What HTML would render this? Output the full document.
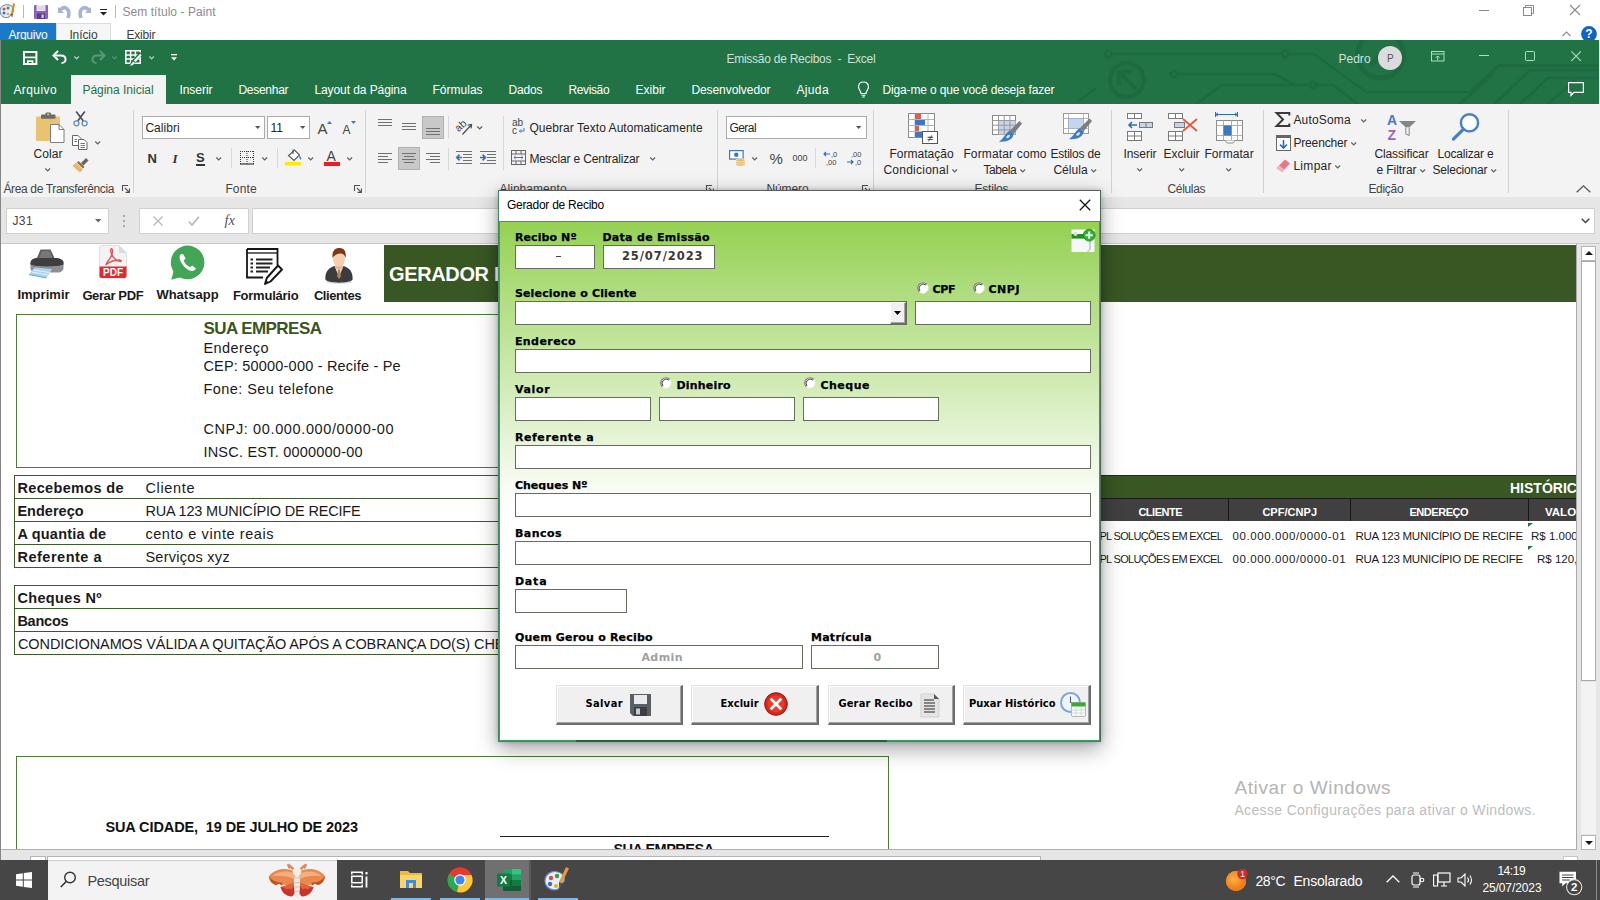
<!DOCTYPE html>
<html lang="pt-BR"><head><meta charset="utf-8"><title>Emissão de Recibos - Excel</title><style>
html,body{margin:0;padding:0}
body{width:1600px;height:900px;overflow:hidden;position:relative;background:#fff;font-family:"Liberation Sans",sans-serif;font-size:12px;color:#262626}
.t{position:absolute;white-space:pre;line-height:0;display:block}
div{box-sizing:border-box}
svg{overflow:visible;display:block}
</style></head><body>
<div style="position:absolute;left:0px;top:0px;width:1600px;height:40px;background:#fff;"></div>
<div style="position:absolute;left:0px;top:23px;width:56px;height:17px;background:#1979ca;"></div>
<div style="position:absolute;left:56px;top:23px;width:55px;height:18px;background:#f5f6f7;border:1px solid #dadbdc;border-bottom:none;"></div>
<span class="t" style="left:8.4px;top:35px;font-size:12px;color:#fff;letter-spacing:-0.25px;">Arquivo</span>
<span class="t" style="left:69.4px;top:35px;font-size:12px;color:#3c3c3c;letter-spacing:-0.10px;">Início</span>
<span class="t" style="left:126.4px;top:35px;font-size:12px;color:#3c3c3c;letter-spacing:-0.16px;">Exibir</span>
<span class="t" style="left:122.4px;top:12px;font-size:12px;color:#8c8c8c;letter-spacing:0.07px;">Sem título - Paint</span>
<div style="position:absolute;left:23px;top:5px;width:1px;height:13px;background:#b9b9b9;"></div>
<div style="position:absolute;left:115px;top:5px;width:1px;height:13px;background:#b9b9b9;"></div>
<svg style="position:absolute;left:0px;top:2px;" width="17" height="18" viewBox="0 0 17 18">
      <path d="M0 9 C0 4 5 2 9 3 C14 4 15 9 12 11 C10 12 11 14 9 15 C5 17 0 14 0 9Z" fill="#e8eef7" stroke="#5b7bb0" stroke-width="1"/>
      <circle cx="4" cy="7" r="1.5" fill="#e04a3a"/><circle cx="8" cy="6" r="1.5" fill="#3a9a3a"/><circle cx="4" cy="11" r="1.5" fill="#3a6fd0"/><circle cx="8" cy="12" r="1.3" fill="#e8b020"/>
      <path d="M13 1 L15 2 L13 12 L11 12Z" fill="#d9892b"/><path d="M11 12 L13 12 L12 16Z" fill="#6b4a2b"/></svg>
<svg style="position:absolute;left:34px;top:5px;" width="14" height="14" viewBox="0 0 14 14"><rect x="0" y="0" width="14" height="14" rx="1" fill="#8a63b8"/><rect x="2.5" y="0" width="9" height="6" fill="#ece6f5"/><path d="M2.5 2 H11.5 M2.5 4 H11.5" stroke="#c9b8e0" stroke-width="0.7"/><rect x="3" y="8.5" width="8" height="5.5" fill="#5a3d86"/><rect x="7.5" y="9.5" width="2.2" height="3.5" fill="#d8cceb"/></svg>
<svg style="position:absolute;left:57px;top:4px;" width="14" height="15" viewBox="0 0 14 15"><path d="M1 3 L1 9 L7 9 Z" fill="#a6b5cf"/><path d="M3 6 C8 1 14 5 11 14" fill="none" stroke="#a6b5cf" stroke-width="3.6"/></svg>
<svg style="position:absolute;left:78px;top:4px;" width="14" height="15" viewBox="0 0 14 15"><path d="M13 3 L13 9 L7 9 Z" fill="#a6b5cf"/><path d="M11 6 C6 1 0 5 3 14" fill="none" stroke="#a6b5cf" stroke-width="3.6"/></svg>
<svg style="position:absolute;left:100px;top:9px;" width="8" height="7" viewBox="0 0 8 7"><rect x="0" y="0" width="7" height="1" fill="#222"/><path d="M0 3 L7 3 L3.5 6.5Z" fill="#222"/></svg>
<div style="position:absolute;left:1479px;top:10px;width:10px;height:1px;background:#8a8a8a;"></div>
<svg style="position:absolute;left:1523px;top:5px;" width="11" height="11" viewBox="0 0 11 11"><rect x="0.5" y="2.5" width="8" height="8" fill="none" stroke="#8a8a8a"/><path d="M2.5 2.5 V0.5 H10.5 V8.5 H8.5" fill="none" stroke="#8a8a8a"/></svg>
<svg style="position:absolute;left:1570px;top:5px;" width="11" height="11" viewBox="0 0 11 11"><path d="M0 0 L10 10 M10 0 L0 10" stroke="#8a8a8a" stroke-width="1.1"/></svg>
<svg style="position:absolute;left:1562px;top:31px;" width="9" height="6" viewBox="0 0 9 6"><path d="M0.5 5 L4.5 1 L8.5 5" fill="none" stroke="#8c8c8c" stroke-width="1.1"/></svg>
<svg style="position:absolute;left:1581px;top:25.5px;" width="16" height="16" viewBox="0 0 16 16"><circle cx="8" cy="8" r="7.9" fill="#1163c4"/><text x="8" y="12.4" text-anchor="middle" font-family="Liberation Sans, sans-serif" font-weight="700" font-size="12" fill="#fff">?</text></svg>
<div style="position:absolute;left:0px;top:40px;width:1600px;height:64px;background:#217346;"></div>
<svg style="position:absolute;left:0px;top:40px;overflow:hidden;" width="1600" height="64" viewBox="0 40 1600 64">
      <g fill="none" stroke="#1e6a40" stroke-width="2.6" stroke-linecap="round" stroke-linejoin="round">
        <circle cx="1108.5" cy="54" r="3.2"/><path d="M1112 54 H1281 M1289 54 H1314 L1366 92 H1470 L1499 65.5 H1600"/><circle cx="1285" cy="54" r="3.2"/>
        <circle cx="1174" cy="74" r="3.2"/><path d="M1177.5 74 H1275 L1294 85 H1309"/><circle cx="1313" cy="85" r="3.2"/><path d="M1317 85 H1333 L1358 104"/>
        <path d="M1196 104 L1222 85 H1290"/>
        <circle cx="1127" cy="80" r="17" stroke-width="4"/><path d="M1119 72 L1135 88 M1119 72 H1130 M1119 72 V83" stroke-width="4.5"/>
        <circle cx="1380.5" cy="55" r="23" stroke-width="5"/><path d="M1372 64 L1388 48" stroke-width="5"/>
        <path d="M1495 104 L1530 70 H1600"/><path d="M1520 104 L1548 78 H1600"/><path d="M1460 104 L1492 75"/><path d="M1548 104 L1575 80"/>
        <path d="M1080 100 L1096 88" />
      </g></svg>
<div style="position:absolute;left:0px;top:40px;width:1px;height:820px;background:#868686;"></div>
<svg style="position:absolute;left:23px;top:51px;" width="15" height="15" viewBox="0 0 15 15"><rect x="1" y="1" width="12.4" height="12" fill="none" stroke="#fff" stroke-width="2"/><path d="M1 6.4 H13.4" stroke="#fff" stroke-width="1.7"/><path d="M4.8 13.5 V10.2 H9.6 V13.5" fill="none" stroke="#fff" stroke-width="1.7"/></svg>
<svg style="position:absolute;left:52px;top:50px;" width="16" height="14" viewBox="0 0 16 14"><path d="M6 1 L1.5 5.5 L6 10" fill="none" stroke="#fff" stroke-width="2"/><path d="M2 5.5 H9 C15 5.5 15 13 9.5 13" fill="none" stroke="#fff" stroke-width="2"/></svg>
<svg style="position:absolute;left:73.5px;top:56px;" width="6" height="4" viewBox="0 0 6 4"><path d="M0.3 0.5 L2.6 2.8 L4.9 0.5" fill="none" stroke="#a9ccb8" stroke-width="1.3"/></svg>
<svg style="position:absolute;left:90px;top:50px;" width="16" height="14" viewBox="0 0 16 14"><path d="M10 1 L14.5 5.5 L10 10" fill="none" stroke="#5a9a78" stroke-width="2"/><path d="M14 5.5 H7 C1 5.5 1 13 6.5 13" fill="none" stroke="#5a9a78" stroke-width="2"/></svg>
<svg style="position:absolute;left:112.2px;top:56px;" width="6" height="4" viewBox="0 0 6 4"><path d="M0.3 0.5 L2.6 2.8 L4.9 0.5" fill="none" stroke="#4f9470" stroke-width="1.3"/></svg>
<svg style="position:absolute;left:125px;top:50px;" width="17" height="16" viewBox="0 0 17 16"><path d="M0.8 0.8 H15.2 V13.2 H0.8Z M0.8 4.9 H15.2 M0.8 9 H15.2 M5.6 0.8 V13.2 M10.4 0.8 V13.2" fill="none" stroke="#fff" stroke-width="1.5"/>
      <path d="M17.5 4.5 L9 14.5 L4 16.8 L6.2 11.5 L14.8 2Z" fill="#217346"/><path d="M15.3 3.8 L16.6 5.2 L10.6 12 L8.8 10.6Z" fill="#fff"/><path d="M8.2 11.4 L10 13 C8.6 15.2 6.4 15.8 4.6 15.6 C6.2 14.8 6.8 12.8 8.2 11.4Z" fill="#fff"/></svg>
<svg style="position:absolute;left:148.5px;top:56px;" width="6" height="4" viewBox="0 0 6 4"><path d="M0.3 0.5 L2.6 2.8 L4.9 0.5" fill="none" stroke="#a9ccb8" stroke-width="1.3"/></svg>
<svg style="position:absolute;left:170.5px;top:54.3px;" width="7" height="7" viewBox="0 0 7 7"><rect x="0" y="0" width="6" height="1.3" fill="#fff"/><path d="M0 3.2 H6 L3 6.6Z" fill="#fff"/></svg>
<span class="t" style="left:726.4px;top:59px;font-size:12px;color:#cfe0d6;letter-spacing:-0.25px;">Emissão de Recibos  -  Excel</span>
<span class="t" style="left:1338.4px;top:59px;font-size:12px;color:#cfe0d6;letter-spacing:0.04px;">Pedro</span>
<div style="position:absolute;left:1378px;top:46px;width:24px;height:24px;background:#dcdcdc;border-radius:50%;"></div>
<span class="t" style="left:1386.9px;top:59px;font-size:10px;color:#555;">P</span>
<svg style="position:absolute;left:1431px;top:51px;" width="14" height="11" viewBox="0 0 14 11"><rect x="0.5" y="0.5" width="12.5" height="9.5" fill="none" stroke="#a9e0c0"/><path d="M0.5 3 H13" stroke="#a9e0c0"/><path d="M6.7 9.5 V5 M4.8 6.8 L6.7 4.9 L8.6 6.8" fill="none" stroke="#a9e0c0"/></svg>
<div style="position:absolute;left:1479px;top:55px;width:10px;height:1px;background:#a9e0c0;"></div>
<svg style="position:absolute;left:1525px;top:51px;" width="11" height="11" viewBox="0 0 11 11"><rect x="0.5" y="0.5" width="9" height="9" rx="0.8" fill="none" stroke="#a9e0c0"/></svg>
<svg style="position:absolute;left:1571px;top:51px;" width="11" height="11" viewBox="0 0 11 11"><path d="M0.3 0.3 L9.9 9.9 M9.9 0.3 L0.3 9.9" stroke="#a9e0c0" stroke-width="1.1"/></svg>
<div style="position:absolute;left:1599px;top:40px;width:1px;height:820px;background:#ececec;"></div>
<div style="position:absolute;left:71px;top:75px;width:95px;height:30px;background:#f3f3f3;"></div>
<span class="t" style="left:13.4px;top:90px;font-size:12px;color:#fff;letter-spacing:0.42px;">Arquivo</span>
<span class="t" style="left:179.4px;top:90px;font-size:12px;color:#fff;letter-spacing:-0.02px;">Inserir</span>
<span class="t" style="left:238.4px;top:90px;font-size:12px;color:#fff;letter-spacing:-0.26px;">Desenhar</span>
<span class="t" style="left:314.4px;top:90px;font-size:12px;color:#fff;letter-spacing:-0.08px;">Layout da Página</span>
<span class="t" style="left:432.4px;top:90px;font-size:12px;color:#fff;letter-spacing:0.03px;">Fórmulas</span>
<span class="t" style="left:508.4px;top:90px;font-size:12px;color:#fff;letter-spacing:-0.12px;">Dados</span>
<span class="t" style="left:568.4px;top:90px;font-size:12px;color:#fff;letter-spacing:-0.36px;">Revisão</span>
<span class="t" style="left:635.4px;top:90px;font-size:12px;color:#fff;letter-spacing:0.04px;">Exibir</span>
<span class="t" style="left:691.4px;top:90px;font-size:12px;color:#fff;letter-spacing:-0.07px;">Desenvolvedor</span>
<span class="t" style="left:796.4px;top:90px;font-size:12px;color:#fff;letter-spacing:0.38px;">Ajuda</span>
<span class="t" style="left:882.4px;top:90px;font-size:12px;color:#fff;letter-spacing:-0.13px;">Diga-me o que você deseja fazer</span>
<span class="t" style="left:82.4px;top:90px;font-size:12px;color:#217346;letter-spacing:-0.01px;">Página Inicial</span>
<svg style="position:absolute;left:857px;top:81px;" width="13" height="17" viewBox="0 0 13 17"><path d="M6.5 1 C3 1 1.5 3.5 1.5 6 C1.5 8.5 4 10 4 12.5 H9 C9 10 11.5 8.5 11.5 6 C11.5 3.5 10 1 6.5 1Z" fill="none" stroke="#fff" stroke-width="1.2"/><path d="M4.5 14.3 H8.5 M5.2 16 H7.8" stroke="#fff" stroke-width="1.1"/></svg>
<svg style="position:absolute;left:1568px;top:82px;" width="17" height="16" viewBox="0 0 17 16"><path d="M0.6 0.6 H15.4 V10.4 H6 L3 13.5 V10.4 H0.6Z" fill="none" stroke="#fff" stroke-width="1.2"/></svg>
<div style="position:absolute;left:1px;top:104px;width:1599px;height:93px;background:#f3f3f3;"></div>
<div style="position:absolute;left:1px;top:197px;width:1599px;height:47px;background:#e6e6e6;"></div>
<div style="position:absolute;left:1px;top:243px;width:1599px;height:1px;background:#c9c9c9;"></div>
<div style="position:absolute;left:6px;top:208px;width:103px;height:26px;background:#fff;border:1px solid #d0d0d0;"></div>
<span class="t" style="left:12.4px;top:221px;font-size:12px;color:#444;letter-spacing:0.43px;">J31</span>
<svg style="position:absolute;left:95px;top:219px;" width="7" height="4" viewBox="0 0 7 4"><path d="M0 0 H6.4 L3.2 3.6Z" fill="#666"/></svg>
<div style="position:absolute;left:123px;top:215px;width:2px;height:2px;background:#a8a8a8;"></div>
<div style="position:absolute;left:123px;top:220px;width:2px;height:2px;background:#a8a8a8;"></div>
<div style="position:absolute;left:123px;top:225px;width:2px;height:2px;background:#a8a8a8;"></div>
<div style="position:absolute;left:139px;top:208px;width:110px;height:26px;background:#fff;border:1px solid #d0d0d0;"></div>
<svg style="position:absolute;left:153px;top:216px;" width="10" height="10" viewBox="0 0 10 10"><path d="M0.5 0.5 L9.5 9.5 M9.5 0.5 L0.5 9.5" stroke="#b5b5b5" stroke-width="1.2"/></svg>
<svg style="position:absolute;left:188px;top:216px;" width="12" height="10" viewBox="0 0 12 10"><path d="M0.8 5.5 L4 9 L11 0.8" fill="none" stroke="#b5b5b5" stroke-width="1.6"/></svg>
<span class="t" style="left:224.4px;top:220px;font-size:14.5px;color:#555;font-style:italic;font-family:'Liberation Serif',serif;">fx</span>
<div style="position:absolute;left:252px;top:208px;width:1343px;height:26px;background:#fff;border:1px solid #d0d0d0;"></div>
<svg style="position:absolute;left:1581px;top:218px;" width="9" height="6" viewBox="0 0 9 6"><path d="M0.7 0.7 L4.5 4.5 L8.3 0.7" fill="none" stroke="#444" stroke-width="1.5"/></svg>
<div style="position:absolute;left:133px;top:110px;width:1px;height:83px;background:#d2d2d2;"></div>
<div style="position:absolute;left:365px;top:110px;width:1px;height:83px;background:#d2d2d2;"></div>
<div style="position:absolute;left:717px;top:110px;width:1px;height:83px;background:#d2d2d2;"></div>
<div style="position:absolute;left:873px;top:110px;width:1px;height:83px;background:#d2d2d2;"></div>
<div style="position:absolute;left:1111px;top:110px;width:1px;height:83px;background:#d2d2d2;"></div>
<div style="position:absolute;left:1263px;top:110px;width:1px;height:83px;background:#d2d2d2;"></div>
<div style="position:absolute;left:1508px;top:110px;width:1px;height:83px;background:#d2d2d2;"></div>
<div style="position:absolute;left:231px;top:148px;width:1px;height:20px;background:#d8d8d8;"></div>
<div style="position:absolute;left:277px;top:148px;width:1px;height:20px;background:#d8d8d8;"></div>
<div style="position:absolute;left:448px;top:116px;width:1px;height:22px;background:#d8d8d8;"></div>
<div style="position:absolute;left:448px;top:148px;width:1px;height:22px;background:#d8d8d8;"></div>
<div style="position:absolute;left:503px;top:116px;width:1px;height:54px;background:#d8d8d8;"></div>
<div style="position:absolute;left:815px;top:148px;width:1px;height:20px;background:#d8d8d8;"></div>
<span class="t" style="left:3.4px;top:189px;font-size:12px;color:#444;letter-spacing:-0.35px;">Área de Transferência</span>
<span class="t" style="left:225.4px;top:189px;font-size:12px;color:#444;letter-spacing:0.13px;">Fonte</span>
<span class="t" style="left:499.4px;top:189px;font-size:12px;color:#444;letter-spacing:0.05px;">Alinhamento</span>
<span class="t" style="left:766.4px;top:189px;font-size:12px;color:#444;letter-spacing:-0.10px;">Número</span>
<span class="t" style="left:974.4px;top:189px;font-size:12px;color:#444;letter-spacing:-0.19px;">Estilos</span>
<span class="t" style="left:1167.4px;top:189px;font-size:12px;color:#444;letter-spacing:-0.30px;">Células</span>
<span class="t" style="left:1368.4px;top:189px;font-size:12px;color:#444;letter-spacing:-0.30px;">Edição</span>
<svg style="position:absolute;left:122px;top:185px;" width="8" height="8" viewBox="0 0 8 8"><path d="M0.5 6 V0.5 H6 M3 3 L7.3 7.3 M7.4 3.6 V7.4 H3.6" fill="none" stroke="#505050" stroke-width="1.1"/></svg>
<svg style="position:absolute;left:354px;top:185px;" width="8" height="8" viewBox="0 0 8 8"><path d="M0.5 6 V0.5 H6 M3 3 L7.3 7.3 M7.4 3.6 V7.4 H3.6" fill="none" stroke="#505050" stroke-width="1.1"/></svg>
<svg style="position:absolute;left:706px;top:185px;" width="8" height="8" viewBox="0 0 8 8"><path d="M0.5 6 V0.5 H6 M3 3 L7.3 7.3 M7.4 3.6 V7.4 H3.6" fill="none" stroke="#505050" stroke-width="1.1"/></svg>
<svg style="position:absolute;left:862px;top:185px;" width="8" height="8" viewBox="0 0 8 8"><path d="M0.5 6 V0.5 H6 M3 3 L7.3 7.3 M7.4 3.6 V7.4 H3.6" fill="none" stroke="#505050" stroke-width="1.1"/></svg>
<svg style="position:absolute;left:1576px;top:185px;" width="15" height="8" viewBox="0 0 15 8"><path d="M0.7 7.3 L7.5 0.8 L14.3 7.3" fill="none" stroke="#555" stroke-width="1.3"/></svg>
<svg style="position:absolute;left:36px;top:112px;" width="29" height="31" viewBox="0 0 29 31">
      <rect x="0" y="4.5" width="24" height="24.5" rx="1.2" fill="#e9c372"/>
      <rect x="5" y="2.6" width="14.5" height="4.2" rx="0.8" fill="#6a6a6a"/><path d="M9.5 3 V1.6 Q9.5 0.4 10.7 0.4 H13.8 Q15 0.4 15 1.6 V3Z" fill="#6a6a6a"/><rect x="11.2" y="1.6" width="2" height="1.6" fill="#e9c372"/>
      <path d="M14.5 12.5 H23 L28 17.5 V30.5 H14.5Z" fill="#fff" stroke="#7d7d7d" stroke-width="1"/><path d="M23 12.5 V17.5 H28" fill="none" stroke="#7d7d7d" stroke-width="1"/></svg>
<span class="t" style="left:33.4px;top:154px;font-size:12px;color:#262626;letter-spacing:0.13px;">Colar</span>
<svg style="position:absolute;left:45.3px;top:167.5px;" width="6" height="4" viewBox="0 0 6 4"><path d="M0.3 0.5 L2.7 2.9 L5.1 0.5" fill="none" stroke="#5e5e5e" stroke-width="1.15"/></svg>
<svg style="position:absolute;left:73px;top:111px;" width="15" height="16" viewBox="0 0 15 16"><path d="M3.2 0.5 L10.3 10 M11.8 0.5 L4.7 10" stroke="#505050" stroke-width="1.7" fill="none"/><circle cx="3.4" cy="12.3" r="2.5" fill="none" stroke="#5b8fc7" stroke-width="1.3"/><circle cx="11.6" cy="12.3" r="2.5" fill="none" stroke="#5b8fc7" stroke-width="1.3"/></svg>
<svg style="position:absolute;left:72px;top:135px;" width="16" height="15" viewBox="0 0 16 15"><path d="M0.5 0.5 H6 L9 3.5 V10.5 H0.5Z" fill="#fff" stroke="#666" stroke-width="1"/><path d="M6.5 4.5 H12 L15 7.5 V14.5 H6.5Z" fill="#fff" stroke="#666" stroke-width="1"/><path d="M8.5 8.5 H13 M8.5 10.5 H13 M8.5 12.5 H13" stroke="#4a7ebb" stroke-width="1"/><path d="M2.5 4.5 H5 M2.5 6.5 H5" stroke="#4a7ebb" stroke-width="1"/></svg>
<svg style="position:absolute;left:95.3px;top:140.5px;" width="6" height="4" viewBox="0 0 6 4"><path d="M0.3 0.5 L2.7 2.9 L5.1 0.5" fill="none" stroke="#5e5e5e" stroke-width="1.15"/></svg>
<svg style="position:absolute;left:72px;top:157px;" width="17" height="16" viewBox="0 0 17 16"><path d="M9 6 L14 1 L16.5 3.5 L11.5 8.5Z" fill="#666"/><path d="M4 5.5 L11 12.5 L8 15.5 L0.5 9Z" fill="#e8b866"/><path d="M6.5 4 L12.5 10 L11 11.5 L5 5.5Z" fill="#8a6a3a"/></svg>
<div style="position:absolute;left:142px;top:116px;width:123px;height:23px;background:#fff;border:1px solid #ababab;"></div>
<span class="t" style="left:145.4px;top:128px;font-size:12px;color:#262626;letter-spacing:0.03px;">Calibri</span>
<svg style="position:absolute;left:255px;top:125.5px;" width="6" height="3" viewBox="0 0 6 3"><path d="M0 0 H5.4 L2.7 3Z" fill="#555"/></svg>
<div style="position:absolute;left:267px;top:116px;width:43px;height:23px;background:#fff;border:1px solid #ababab;"></div>
<span class="t" style="left:270.4px;top:128px;font-size:12px;color:#262626;">11</span>
<svg style="position:absolute;left:300px;top:125.5px;" width="6" height="3" viewBox="0 0 6 3"><path d="M0 0 H5.4 L2.7 3Z" fill="#555"/></svg>
<span class="t" style="left:317.4px;top:129px;font-size:15px;color:#444;letter-spacing:0.20px;">A</span>
<svg style="position:absolute;left:327px;top:120.5px;" width="5" height="3" viewBox="0 0 5 3"><path d="M0 3 L2.5 0 L5 3Z" fill="#3a78c0"/></svg>
<span class="t" style="left:342.4px;top:130px;font-size:12px;color:#444;letter-spacing:0.20px;">A</span>
<svg style="position:absolute;left:351px;top:120.5px;" width="5" height="3" viewBox="0 0 5 3"><path d="M0 0 L2.5 3 L5 0Z" fill="#3a78c0"/></svg>
<span class="t" style="left:147.4px;top:159px;font-size:13px;color:#333;font-weight:700;letter-spacing:0.81px;">N</span>
<span class="t" style="left:172.4px;top:159px;font-size:13px;color:#333;font-weight:700;font-style:italic;font-family:'Liberation Serif',serif;letter-spacing:3.14px;">I</span>
<span class="t" style="left:195.9px;top:158px;font-size:13px;color:#333;font-weight:700;letter-spacing:1.03px;">S</span>
<div style="position:absolute;left:196px;top:164px;width:9px;height:1.5px;background:#333;"></div>
<svg style="position:absolute;left:216.3px;top:156.5px;" width="6" height="4" viewBox="0 0 6 4"><path d="M0.3 0.5 L2.7 2.9 L5.1 0.5" fill="none" stroke="#5e5e5e" stroke-width="1.15"/></svg>
<svg style="position:absolute;left:240px;top:151px;" width="14" height="14" viewBox="0 0 14 14"><path d="M0.5 0 V13 M13.5 0 V13 M7 0 V13 M0 0.5 H14 M0 6.5 H14" fill="none" stroke="#3a3a3a" stroke-width="1" stroke-dasharray="1 1"/><path d="M0 13 H14" stroke="#3a3a3a" stroke-width="1.2"/></svg>
<svg style="position:absolute;left:262.3px;top:156.5px;" width="6" height="4" viewBox="0 0 6 4"><path d="M0.3 0.5 L2.7 2.9 L5.1 0.5" fill="none" stroke="#5e5e5e" stroke-width="1.15"/></svg>
<svg style="position:absolute;left:285px;top:149px;" width="18" height="17" viewBox="0 0 18 17"><path d="M5.5 5 L9.5 1 L14.5 6 L9 11.5 L3.5 6.5Z" fill="#fff" stroke="#555" stroke-width="1.1"/><path d="M8 0.5 V5" stroke="#555" stroke-width="1.1"/><path d="M14.5 6.5 C16.5 8.5 17 10 15.7 10.8 C14.4 10 14 8.5 14.5 6.5Z" fill="#3b78c2"/><rect x="0" y="13" width="16" height="3.5" fill="#ffeb00"/></svg>
<svg style="position:absolute;left:308.3px;top:156.5px;" width="6" height="4" viewBox="0 0 6 4"><path d="M0.3 0.5 L2.7 2.9 L5.1 0.5" fill="none" stroke="#5e5e5e" stroke-width="1.15"/></svg>
<span class="t" style="left:326.4px;top:156px;font-size:14px;color:#444;letter-spacing:1.86px;">A</span>
<div style="position:absolute;left:324px;top:162px;width:16px;height:4px;background:#ee1c25;"></div>
<svg style="position:absolute;left:347.3px;top:156.5px;" width="6" height="4" viewBox="0 0 6 4"><path d="M0.3 0.5 L2.7 2.9 L5.1 0.5" fill="none" stroke="#5e5e5e" stroke-width="1.15"/></svg>
<svg style="position:absolute;left:378px;top:119px;" width="14" height="9" viewBox="0 0 14 9"><rect x="0" y="0" width="14" height="1" fill="#707070"/><rect x="0" y="3" width="14" height="1" fill="#707070"/><rect x="0" y="6" width="14" height="1" fill="#707070"/></svg>
<svg style="position:absolute;left:402px;top:123px;" width="14" height="9" viewBox="0 0 14 9"><rect x="0" y="0" width="14" height="1" fill="#707070"/><rect x="0" y="3" width="14" height="1" fill="#707070"/><rect x="0" y="6" width="14" height="1" fill="#707070"/></svg>
<div style="position:absolute;left:422px;top:116px;width:22px;height:23px;background:#c8c8c8;border:1px solid #b0b0b0;"></div>
<svg style="position:absolute;left:426px;top:128px;" width="14" height="9" viewBox="0 0 14 9"><rect x="0" y="0" width="14" height="1" fill="#707070"/><rect x="0" y="3" width="14" height="1" fill="#707070"/><rect x="0" y="6" width="14" height="1" fill="#707070"/></svg>
<svg style="position:absolute;left:378px;top:153px;" width="14" height="12" viewBox="0 0 14 12"><rect x="0" y="0" width="14" height="1" fill="#707070"/><rect x="0" y="3" width="10" height="1" fill="#707070"/><rect x="0" y="6" width="14" height="1" fill="#707070"/><rect x="0" y="9" width="10" height="1" fill="#707070"/></svg>
<div style="position:absolute;left:398px;top:147px;width:22px;height:23px;background:#c8c8c8;border:1px solid #b0b0b0;"></div>
<svg style="position:absolute;left:402px;top:153px;" width="14" height="12" viewBox="0 0 14 12"><rect x="0.0" y="0" width="14" height="1" fill="#707070"/><rect x="2.0" y="3" width="10" height="1" fill="#707070"/><rect x="0.0" y="6" width="14" height="1" fill="#707070"/><rect x="2.0" y="9" width="10" height="1" fill="#707070"/></svg>
<svg style="position:absolute;left:426px;top:153px;" width="14" height="12" viewBox="0 0 14 12"><rect x="0" y="0" width="14" height="1" fill="#707070"/><rect x="4" y="3" width="10" height="1" fill="#707070"/><rect x="0" y="6" width="14" height="1" fill="#707070"/><rect x="4" y="9" width="10" height="1" fill="#707070"/></svg>
<svg style="position:absolute;left:455px;top:117px;" width="18" height="19" viewBox="0 0 18 19"><text x="0" y="12" font-family="Liberation Sans, sans-serif" font-size="10.5" fill="#4a4a4a" transform="rotate(-42 6 9)">ab</text><path d="M7.5 17.5 L16.5 7.5 M16.7 7.3 L12.6 8.2 M16.7 7.3 L16 11.4" fill="none" stroke="#4a4a4a" stroke-width="1.15"/></svg>
<svg style="position:absolute;left:477.3px;top:125.5px;" width="6" height="4" viewBox="0 0 6 4"><path d="M0.3 0.5 L2.7 2.9 L5.1 0.5" fill="none" stroke="#5e5e5e" stroke-width="1.15"/></svg>
<svg style="position:absolute;left:456px;top:151px;" width="16" height="13" viewBox="0 0 16 13"><path d="M0 0.5 H16 M7 3.5 H16 M7 6.5 H16 M7 9.5 H16 M0 12.5 H16" stroke="#707070"/><path d="M6.2 6.5 H1.2 M3.6 3.6 L0.8 6.5 L3.6 9.4" fill="none" stroke="#3a6fb5" stroke-width="1.7"/></svg>
<svg style="position:absolute;left:480px;top:151px;" width="16" height="13" viewBox="0 0 16 13"><path d="M0 0.5 H16 M7 3.5 H16 M7 6.5 H16 M7 9.5 H16 M0 12.5 H16" stroke="#707070"/><path d="M0 6.5 H5 M2.6 3.6 L5.4 6.5 L2.6 9.4" fill="none" stroke="#3a6fb5" stroke-width="1.7"/></svg>
<svg style="position:absolute;left:512px;top:118px;" width="14" height="16" viewBox="0 0 14 16"><text x="0" y="7.5" font-family="Liberation Sans, sans-serif" font-size="10" fill="#444">ab</text><text x="0" y="15.5" font-family="Liberation Sans, sans-serif" font-size="10" fill="#444">c</text><path d="M12 10 V13 H7.5 M9.2 11.3 L7.5 13 L9.2 14.7" fill="none" stroke="#3b78c2" stroke-width="1"/></svg>
<span class="t" style="left:529.4px;top:128px;font-size:12px;color:#262626;letter-spacing:0.05px;">Quebrar Texto Automaticamente</span>
<svg style="position:absolute;left:511px;top:150px;" width="16" height="15" viewBox="0 0 16 15"><rect x="0.5" y="0.5" width="14" height="14" fill="none" stroke="#666"/><path d="M0.5 4 H14.5 M0.5 11 H14.5 M5 0.5 V4 M10 0.5 V4 M5 11 V14.5 M10 11 V14.5" stroke="#666"/><path d="M3 7.5 H12 M4.6 6 L3 7.5 L4.6 9 M10.4 6 L12 7.5 L10.4 9" fill="none" stroke="#3b78c2" stroke-width="1"/></svg>
<span class="t" style="left:529.4px;top:159px;font-size:12px;color:#262626;letter-spacing:-0.16px;">Mesclar e Centralizar</span>
<svg style="position:absolute;left:650.3px;top:156.5px;" width="6" height="4" viewBox="0 0 6 4"><path d="M0.3 0.5 L2.7 2.9 L5.1 0.5" fill="none" stroke="#5e5e5e" stroke-width="1.15"/></svg>
<div style="position:absolute;left:726px;top:116px;width:141px;height:23px;background:#fff;border:1px solid #ababab;"></div>
<span class="t" style="left:729.4px;top:128px;font-size:12px;color:#262626;letter-spacing:-0.54px;">Geral</span>
<svg style="position:absolute;left:856px;top:125.5px;" width="6" height="3" viewBox="0 0 6 3"><path d="M0 0 H5.4 L2.7 3Z" fill="#555"/></svg>
<svg style="position:absolute;left:729px;top:150px;" width="17" height="16" viewBox="0 0 17 16"><rect x="0.6" y="0.6" width="13.5" height="8.5" fill="#fff" stroke="#3b78c2" stroke-width="1.2"/><circle cx="7.3" cy="4.8" r="2.2" fill="#3b78c2"/><g fill="#e9bb6c" stroke="#f3f3f3" stroke-width="0.6"><ellipse cx="11.5" cy="14.6" rx="4.6" ry="1.7"/><ellipse cx="11.5" cy="12.4" rx="4.6" ry="1.7"/><ellipse cx="11.5" cy="10.2" rx="4.6" ry="1.7"/></g></svg>
<svg style="position:absolute;left:752.3px;top:156.5px;" width="6" height="4" viewBox="0 0 6 4"><path d="M0.3 0.5 L2.7 2.9 L5.1 0.5" fill="none" stroke="#5e5e5e" stroke-width="1.15"/></svg>
<span class="t" style="left:769.4px;top:159px;font-size:15px;color:#444;letter-spacing:0.86px;">%</span>
<span class="t" style="left:792.4px;top:158px;font-size:9px;color:#444;letter-spacing:0.09px;">000</span>
<svg style="position:absolute;left:823px;top:150px;" width="16" height="16" viewBox="0 0 16 16"><text x="8" y="6.5" font-family="Liberation Sans, sans-serif" font-size="7.5" fill="#444">,0</text><text x="3" y="14.5" font-family="Liberation Sans, sans-serif" font-size="7.5" fill="#444">,00</text><path d="M7 4 H1 M3 2 L1 4 L3 6" fill="none" stroke="#2b6cb8" stroke-width="1.1"/></svg>
<svg style="position:absolute;left:847px;top:150px;" width="16" height="16" viewBox="0 0 16 16"><text x="4" y="6.5" font-family="Liberation Sans, sans-serif" font-size="7.5" fill="#444">,00</text><text x="8" y="14.5" font-family="Liberation Sans, sans-serif" font-size="7.5" fill="#444">,0</text><path d="M0 12 H6 M4 10 L6 12 L4 14" fill="none" stroke="#2b6cb8" stroke-width="1.1"/></svg>
<svg style="position:absolute;left:908px;top:113px;" width="31" height="32" viewBox="0 0 31 32"><rect x="0.5" y="0.5" width="26" height="24" fill="#fff" stroke="#8a8a8a"/><path d="M0.5 6.5 H26.5 M0.5 12.5 H26.5 M0.5 18.5 H26.5 M7 0.5 V24.5 M20 0.5 V24.5" stroke="#b5b5b5"/>
      <rect x="7" y="1" width="6" height="5" fill="#d9614c"/><rect x="7" y="7" width="10" height="5" fill="#3b78c2"/><rect x="7" y="13" width="4" height="5" fill="#d9614c"/><rect x="7" y="19" width="7" height="5" fill="#3b78c2"/>
      <rect x="14.5" y="18.5" width="15" height="12" fill="#fff" stroke="#555"/><text x="22" y="28.5" text-anchor="middle" font-family="Liberation Sans, sans-serif" font-size="11" fill="#333">≠</text></svg>
<span class="t" style="left:889.4px;top:154px;font-size:12px;color:#262626;letter-spacing:0.02px;">Formatação</span>
<span class="t" style="left:883.4px;top:170px;font-size:12px;color:#262626;letter-spacing:0.25px;">Condicional</span>
<svg style="position:absolute;left:952.3px;top:168.5px;" width="6" height="4" viewBox="0 0 6 4"><path d="M0.3 0.5 L2.7 2.9 L5.1 0.5" fill="none" stroke="#5e5e5e" stroke-width="1.15"/></svg>
<svg style="position:absolute;left:992px;top:115px;" width="33" height="30" viewBox="0 0 33 30"><rect x="0.5" y="0.5" width="23" height="19" fill="#fff" stroke="#8a8a8a"/><rect x="6.5" y="5.5" width="17" height="14" fill="#c5d5ea"/><path d="M0.5 5.5 H23.5 M0.5 10.2 H23.5 M0.5 14.9 H23.5 M6.5 0.5 V19.5 M12.2 0.5 V19.5 M17.9 0.5 V19.5" stroke="#9a9a9a"/><path d="M27.5 6 L30 8.5 L21.5 19 L18 15.5Z" fill="#7d7d7d"/><path d="M18 15.5 L21.5 19 C21.5 25 13 27.5 7 26.5 C11.5 24.5 12.5 18.5 18 15.5Z" fill="#3f7bc0"/><ellipse cx="16.2" cy="21.5" rx="2.2" ry="1.3" fill="#dbe8f6" transform="rotate(-40 16.2 21.5)"/></svg>
<span class="t" style="left:963.4px;top:154px;font-size:12px;color:#262626;letter-spacing:0.15px;">Formatar como</span>
<span class="t" style="left:983.4px;top:170px;font-size:12px;color:#262626;letter-spacing:-0.43px;">Tabela</span>
<svg style="position:absolute;left:1020.3px;top:168.5px;" width="6" height="4" viewBox="0 0 6 4"><path d="M0.3 0.5 L2.7 2.9 L5.1 0.5" fill="none" stroke="#5e5e5e" stroke-width="1.15"/></svg>
<svg style="position:absolute;left:1063px;top:113px;" width="33" height="32" viewBox="0 0 33 32"><rect x="0.5" y="0.5" width="25" height="20" fill="#fff" stroke="#9a9a9a"/><path d="M0.5 5.5 H25.5 M0.5 15.5 H25.5 M5.5 0.5 V20.5 M20.5 0.5 V20.5" stroke="#b5b5b5"/><rect x="5.5" y="5.5" width="15" height="10" fill="#c5d5ea" stroke="#9db4d4"/><path d="M26.5 5.5 L29 8.0 L20.5 18.5 L17 15.0Z" fill="#7d7d7d"/><path d="M17 15.0 L20.5 18.5 C20.5 24.5 12 27.0 6 26.0 C10.5 24.0 11.5 18.0 17 15.0Z" fill="#3f7bc0"/><ellipse cx="15.2" cy="21.0" rx="2.2" ry="1.3" fill="#dbe8f6" transform="rotate(-40 15.2 21.0)"/></svg>
<span class="t" style="left:1050.4px;top:154px;font-size:12px;color:#262626;letter-spacing:-0.20px;">Estilos de</span>
<span class="t" style="left:1053.4px;top:170px;font-size:12px;color:#262626;letter-spacing:0.04px;">Célula</span>
<svg style="position:absolute;left:1091.3px;top:168.5px;" width="6" height="4" viewBox="0 0 6 4"><path d="M0.3 0.5 L2.7 2.9 L5.1 0.5" fill="none" stroke="#5e5e5e" stroke-width="1.15"/></svg>
<svg style="position:absolute;left:1127px;top:113px;" width="27" height="29" viewBox="0 0 27 29"><g fill="#fff" stroke="#7a7a7a"><rect x="0.5" y="0.5" width="14" height="5"/><rect x="12.5" y="9.5" width="13" height="5" fill="#c5d5ea"/><rect x="0.5" y="18.5" width="14" height="9"/></g><path d="M7.5 0.5 V5.5 M19 9.5 V14.5 M7.5 18.5 V27.5 M0.5 23 H14.5" stroke="#7a7a7a"/><path d="M10 12 H2 M5 9 L2 12 L5 15" fill="none" stroke="#2b6cb8" stroke-width="1.6"/></svg>
<span class="t" style="left:1123.4px;top:154px;font-size:12px;color:#262626;letter-spacing:-0.02px;">Inserir</span>
<svg style="position:absolute;left:1137.3px;top:167.5px;" width="6" height="4" viewBox="0 0 6 4"><path d="M0.3 0.5 L2.7 2.9 L5.1 0.5" fill="none" stroke="#5e5e5e" stroke-width="1.15"/></svg>
<svg style="position:absolute;left:1168px;top:113px;" width="31" height="29" viewBox="0 0 31 29"><g fill="#fff" stroke="#7a7a7a"><rect x="0.5" y="0.5" width="14" height="5"/><rect x="6.5" y="9.5" width="10" height="5" fill="#c5d5ea"/><rect x="0.5" y="18.5" width="14" height="9"/></g><path d="M7.5 0.5 V5.5 M7.5 18.5 V27.5 M0.5 23 H14.5" stroke="#7a7a7a"/><path d="M15 6 L29 18 M29 6 L15 18" stroke="#e05a3c" stroke-width="1.8"/></svg>
<span class="t" style="left:1163.4px;top:154px;font-size:12px;color:#262626;letter-spacing:0.03px;">Excluir</span>
<svg style="position:absolute;left:1179.3px;top:167.5px;" width="6" height="4" viewBox="0 0 6 4"><path d="M0.3 0.5 L2.7 2.9 L5.1 0.5" fill="none" stroke="#5e5e5e" stroke-width="1.15"/></svg>
<svg style="position:absolute;left:1215px;top:112px;" width="29" height="31" viewBox="0 0 29 31"><path d="M0.5 2.5 H22.5 M0.5 0 V5 M22.5 0 V5 M3 0.8 L0.8 2.5 L3 4.2 M20 0.8 L22.2 2.5 L20 4.2" fill="none" stroke="#2b6cb8"/><rect x="1.5" y="8.5" width="26" height="20" fill="#fff" stroke="#8a8a8a"/><path d="M8.5 8.5 V28.5 M16.5 8.5 V28.5 M22.5 8.5 V28.5 M1.5 13.5 H27.5 M1.5 23.5 H27.5" stroke="#b0b0b0"/><rect x="8.5" y="13.5" width="8" height="10" fill="#3b78c2"/><path d="M10 28.5 L12 31 H18 L20 28.5" fill="#fff" stroke="#8a8a8a"/></svg>
<span class="t" style="left:1204.4px;top:154px;font-size:12px;color:#262626;letter-spacing:0.08px;">Formatar</span>
<svg style="position:absolute;left:1226.3px;top:167.5px;" width="6" height="4" viewBox="0 0 6 4"><path d="M0.3 0.5 L2.7 2.9 L5.1 0.5" fill="none" stroke="#5e5e5e" stroke-width="1.15"/></svg>
<svg style="position:absolute;left:1275px;top:112px;" width="16" height="15" viewBox="0 0 16 15"><path d="M14.3 3.6 V1 H1.6 L8 7.5 L1.6 14 H14.3 V11.4" fill="none" stroke="#3a3a3a" stroke-width="2"/></svg>
<span class="t" style="left:1293.4px;top:120px;font-size:12px;color:#262626;letter-spacing:0.17px;">AutoSoma</span>
<svg style="position:absolute;left:1361.3px;top:118.5px;" width="6" height="4" viewBox="0 0 6 4"><path d="M0.3 0.5 L2.7 2.9 L5.1 0.5" fill="none" stroke="#5e5e5e" stroke-width="1.15"/></svg>
<svg style="position:absolute;left:1276px;top:135px;" width="15" height="16" viewBox="0 0 15 16"><rect x="0.5" y="0.5" width="14" height="15" fill="#fff" stroke="#666"/><rect x="0.5" y="0.5" width="14" height="2.5" fill="#666"/><path d="M7.5 5 V12.5 M4 9.5 L7.5 13 L11 9.5" fill="none" stroke="#2b6cb8" stroke-width="1.6"/></svg>
<span class="t" style="left:1293.4px;top:143px;font-size:12px;color:#262626;letter-spacing:-0.15px;">Preencher</span>
<svg style="position:absolute;left:1351.3px;top:141.5px;" width="6" height="4" viewBox="0 0 6 4"><path d="M0.3 0.5 L2.7 2.9 L5.1 0.5" fill="none" stroke="#5e5e5e" stroke-width="1.15"/></svg>
<svg style="position:absolute;left:1275px;top:159px;" width="16" height="13" viewBox="0 0 16 13"><path d="M10 0.5 L15 4.5 L7 13 L1.500 9Z" fill="#e9758a"/><path d="M4.200 6.600 L9.400 10.600 L7 13 L1.500 9Z" fill="#f2b6c1"/></svg>
<span class="t" style="left:1293.4px;top:166px;font-size:12px;color:#262626;letter-spacing:0.30px;">Limpar</span>
<svg style="position:absolute;left:1335.3px;top:164.5px;" width="6" height="4" viewBox="0 0 6 4"><path d="M0.3 0.5 L2.7 2.9 L5.1 0.5" fill="none" stroke="#5e5e5e" stroke-width="1.15"/></svg>
<svg style="position:absolute;left:1387px;top:113px;" width="30" height="29" viewBox="0 0 30 29"><text x="0" y="12" font-family="Liberation Sans, sans-serif" font-weight="700" font-size="14" fill="#4a78c2">A</text><text x="0.5" y="27" font-family="Liberation Sans, sans-serif" font-weight="700" font-size="14" fill="#a060c8">Z</text><path d="M12 8 H29 L22.2 14.5 H18.800Z" fill="#858585"/><path d="M18.800 14.500 V21 L22.200 22.500 V14.500" fill="#f3f3f3" stroke="#858585" stroke-width="1"/></svg>
<span class="t" style="left:1374.4px;top:154px;font-size:12px;color:#262626;letter-spacing:-0.11px;">Classificar</span>
<span class="t" style="left:1376.4px;top:170px;font-size:12px;color:#262626;letter-spacing:-0.06px;">e Filtrar</span>
<svg style="position:absolute;left:1420.3px;top:168.5px;" width="6" height="4" viewBox="0 0 6 4"><path d="M0.3 0.5 L2.7 2.9 L5.1 0.5" fill="none" stroke="#5e5e5e" stroke-width="1.15"/></svg>
<svg style="position:absolute;left:1451px;top:112px;" width="30" height="30" viewBox="0 0 30 30"><circle cx="18.5" cy="10.8" r="8.6" fill="#fafcff" stroke="#4a7fc0" stroke-width="2.4"/><path d="M12.300 17.300 L2.500 27" stroke="#4a7fc0" stroke-width="3.2" stroke-linecap="round"/></svg>
<span class="t" style="left:1437.4px;top:154px;font-size:12px;color:#262626;letter-spacing:-0.18px;">Localizar e</span>
<span class="t" style="left:1432.4px;top:170px;font-size:12px;color:#262626;letter-spacing:-0.17px;">Selecionar</span>
<svg style="position:absolute;left:1491.3px;top:168.5px;" width="6" height="4" viewBox="0 0 6 4"><path d="M0.3 0.5 L2.7 2.9 L5.1 0.5" fill="none" stroke="#5e5e5e" stroke-width="1.15"/></svg>
<div style="position:absolute;left:1px;top:244px;width:1575px;height:606px;background:#fff;"></div>
<div style="position:absolute;left:1px;top:849px;width:1599px;height:1px;background:#b0b0b0;"></div>
<div style="position:absolute;left:1px;top:850px;width:1599px;height:10px;background:#e6e6e6;"></div>
<div style="position:absolute;left:30px;top:856px;width:16px;height:5px;background:#fff;border:1px solid #b5b5b5;border-bottom:none;"></div>
<div style="position:absolute;left:47px;top:856px;width:994px;height:5px;background:#fff;border:1px solid #b5b5b5;border-bottom:none;"></div>
<div style="position:absolute;left:1563px;top:856px;width:15px;height:5px;background:#fff;border:1px solid #c5c5c5;border-bottom:none;"></div>
<div style="position:absolute;left:1576px;top:244px;width:24px;height:606px;background:#e6e6e6;border-left:1px solid #a9a9a9;"></div>
<div style="position:absolute;left:1581px;top:246px;width:15px;height:15px;background:#fff;border:1px solid #b5b5b5;"></div>
<svg style="position:absolute;left:1585px;top:251px;" width="8" height="4" viewBox="0 0 8 4"><path d="M0 4 L4 0 L8 4Z" fill="#1a1a1a"/></svg>
<div style="position:absolute;left:1581px;top:261px;width:15px;height:420px;background:#fff;border:1px solid #a9a9a9;"></div>
<div style="position:absolute;left:1581px;top:682px;width:15px;height:152px;background:#f3f3f3;"></div>
<div style="position:absolute;left:1581px;top:835px;width:15px;height:15px;background:#fff;border:1px solid #b5b5b5;"></div>
<svg style="position:absolute;left:1585px;top:841px;" width="8" height="4" viewBox="0 0 8 4"><path d="M0 0 L4 4 L8 0Z" fill="#1a1a1a"/></svg>
<div style="position:absolute;left:384px;top:245px;width:1192px;height:57px;background:#385723;"></div>
<span class="t" style="left:389.0px;top:274px;font-size:20px;color:#fff;font-weight:700;letter-spacing:-0.36px;">GERADOR DE RECIBOS</span>
<svg style="position:absolute;left:28px;top:249px;" width="37" height="30" viewBox="0 0 37 30">
      <path d="M12.5 0.5 L22.5 0.5 L27 10 L8.5 10Z" fill="#5e5e5e"/><path d="M14 2 L21.5 2 L24.5 9 L11 9Z" fill="#777"/>
      <path d="M2.5 14 C2.5 10.5 6 9 10 9 L27 9 C31.5 9 35.5 10.5 35.5 14 L35.5 19 C35.5 21.5 33 23.5 29.5 23.5 L8 23.5 C4.5 23.5 2.5 21.5 2.5 19Z" fill="#8f8f8f"/>
      <path d="M2.5 14 C2.5 10.5 6 9 10 9 L27 9 C31.5 9 35.5 10.5 35.5 14 L35.5 15.5 C30 18 8 18 2.5 15.5Z" fill="#3e3e3e"/>
      <path d="M6.5 18.5 L24 20 L18.5 29 L1 25.5Z" fill="#a9d3f0"/><path d="M5.5 21 L21.5 23.5 M4 23 L20 26" stroke="#e6f3fc" stroke-width="1"/><path d="M1 25.5 L18.5 29" stroke="#6fa6d0" stroke-width="1"/></svg>
<span class="t" style="left:17.4px;top:295px;font-size:13px;color:#1a1a1a;font-weight:700;letter-spacing:0.03px;">Imprimir</span>
<svg style="position:absolute;left:99px;top:245px;" width="29" height="34" viewBox="0 0 29 34"><path d="M2.5 0.5 H20 L27.5 8 V31 Q27.5 33 25.5 33 H2.5 Q0.5 33 0.5 31 V2.5 Q0.5 0.5 2.5 0.5Z" fill="#f3f3f3" stroke="#dedede"/><path d="M20 0.5 V8 H27.5Z" fill="#dadada"/>
      <path d="M8 17.5 C11.5 13 14.5 7 13.2 4.2 C12 2.6 10.8 5.2 12.6 9.2 C14.4 13.2 18.2 15.8 21 16.4 C23 16.8 22.4 14.6 19.4 15 C15.6 15.4 11 16.6 8.4 18.6 C6.4 20.2 7 19.6 8 17.5Z" fill="none" stroke="#e05560" stroke-width="1.4"/>
      <path d="M0.5 21.5 H27.5 V31 Q27.5 33 25.5 33 H2.5 Q0.5 33 0.5 31Z" fill="#e6282e"/><text x="14" y="31" text-anchor="middle" font-family="Liberation Sans, sans-serif" font-weight="700" font-size="10" fill="#fff">PDF</text></svg>
<span class="t" style="left:82.4px;top:296px;font-size:13px;color:#1a1a1a;font-weight:700;letter-spacing:-0.39px;">Gerar PDF</span>
<svg style="position:absolute;left:170px;top:245px;" width="36" height="36" viewBox="0 0 36 36"><circle cx="17.6" cy="17.4" r="16.8" fill="#43a556"/><path d="M1.2 34.8 L4.6 23 L13.5 31.5Z" fill="#43a556"/>
      <path d="M11.2 9 C9.2 10.2 9 13.4 11.2 17.4 C13.4 21.4 17.2 24.8 20.8 25.8 C23.2 26.4 25.2 25.4 25.8 23.2 L22.2 20.6 L20.2 22.2 C17.2 21.2 14.6 18.4 13.6 15.6 L15.6 13.8 L13.6 9.6Z" fill="#fff"/></svg>
<span class="t" style="left:156.4px;top:295px;font-size:13px;color:#1a1a1a;font-weight:700;letter-spacing:0.01px;">Whatsapp</span>
<svg style="position:absolute;left:246px;top:248px;" width="38" height="37" viewBox="0 0 38 37"><path d="M1 1 H31.5 V17 M1 1 V29.5 H17" fill="none" stroke="#161616" stroke-width="1.8"/><path d="M1 5 H31.5" stroke="#161616" stroke-width="1.3"/>
      <path d="M4.5 11.5 H7 M10 11.5 H26.5 M4.5 15.5 H7 M10 15.5 H26.5 M4.5 19.5 H7 M10 19.5 H24 M4.5 23.5 H7 M10 23.5 H22" stroke="#222" stroke-width="1.9"/>
      <path d="M32 17.5 L36 21.5 L24.5 33.5 L19 36 L20.8 30Z" fill="#fff" stroke="#161616" stroke-width="1.9" stroke-linejoin="round"/><path d="M19 36 L22.5 34.6 L20.4 32.3Z" fill="#161616"/></svg>
<span class="t" style="left:232.9px;top:296px;font-size:13px;color:#1a1a1a;font-weight:700;letter-spacing:-0.24px;">Formulário</span>
<svg style="position:absolute;left:323px;top:247px;" width="32" height="37" viewBox="0 0 32 37"><ellipse cx="16" cy="35" rx="13" ry="1.8" fill="#dedede"/>
      <path d="M2.5 33 C1.5 25 6 20.5 11.5 19 L16 22 L20.5 19 C26 20.5 30.5 25 29.5 33 C25 36.5 7 36.5 2.5 33Z" fill="#3a3c3e"/>
      <path d="M11.5 19 L16 30 L20.5 19 L16 21.5Z" fill="#e9e4dc"/><path d="M15 22 H17 L17.8 29.5 L16 32 L14.2 29.5Z" fill="#b08752"/>
      <path d="M12.5 16 H19.5 V21 L16 23 L12.5 21Z" fill="#e9b48a"/>
      <ellipse cx="16" cy="12" rx="6" ry="7.8" fill="#f7cfae"/><path d="M9.6 11 C8.6 3.5 12.5 0.6 17 1 C22 1.4 23.4 5.5 22.6 11 C21.6 8 20 6.2 17 6.6 C13.6 7 11.4 8.2 9.6 11Z" fill="#7a3a16"/></svg>
<span class="t" style="left:313.9px;top:296px;font-size:13px;color:#1a1a1a;font-weight:700;letter-spacing:-0.41px;">Clientes</span>
<div style="position:absolute;left:16px;top:314px;width:560px;height:154px;border:1px solid #4f7a38;"></div>
<span class="t" style="left:203.4px;top:329px;font-size:17px;color:#375623;font-weight:700;letter-spacing:-0.55px;">SUA EMPRESA</span>
<span class="t" style="left:203.4px;top:348px;font-size:14.5px;color:#1a1a1a;letter-spacing:0.45px;">Endereço</span>
<span class="t" style="left:203.4px;top:366px;font-size:14.5px;color:#1a1a1a;letter-spacing:0.20px;">CEP: 50000-000 - Recife - Pe</span>
<span class="t" style="left:203.4px;top:389px;font-size:14.5px;color:#1a1a1a;letter-spacing:0.45px;">Fone: Seu telefone</span>
<span class="t" style="left:203.4px;top:429px;font-size:14.5px;color:#1a1a1a;letter-spacing:0.63px;">CNPJ: 00.000.000/0000-00</span>
<span class="t" style="left:203.4px;top:452px;font-size:14.5px;color:#1a1a1a;letter-spacing:0.22px;">INSC. EST. 0000000-00</span>
<div style="position:absolute;left:14px;top:475px;width:561px;height:93px;border:1px solid #3d5a2c;"></div>
<div style="position:absolute;left:14px;top:498px;width:561px;height:1px;background:#3d5a2c;"></div>
<div style="position:absolute;left:14px;top:521px;width:561px;height:1px;background:#3d5a2c;"></div>
<div style="position:absolute;left:14px;top:544px;width:561px;height:1px;background:#3d5a2c;"></div>
<span class="t" style="left:17.4px;top:488px;font-size:14.5px;color:#1a1a1a;font-weight:700;letter-spacing:0.35px;">Recebemos de</span>
<span class="t" style="left:145.4px;top:488px;font-size:14.5px;color:#1a1a1a;letter-spacing:0.68px;">Cliente</span>
<span class="t" style="left:17.4px;top:511px;font-size:14.5px;color:#1a1a1a;font-weight:700;letter-spacing:0.02px;">Endereço</span>
<span class="t" style="left:145.4px;top:511px;font-size:14.5px;color:#1a1a1a;letter-spacing:-0.18px;">RUA 123 MUNICÍPIO DE RECIFE</span>
<span class="t" style="left:17.4px;top:534px;font-size:14.5px;color:#1a1a1a;font-weight:700;letter-spacing:0.20px;">A quantia de</span>
<span class="t" style="left:145.4px;top:534px;font-size:14.5px;color:#1a1a1a;letter-spacing:0.58px;">cento e vinte reais</span>
<span class="t" style="left:17.4px;top:557px;font-size:14.5px;color:#1a1a1a;font-weight:700;letter-spacing:0.52px;">Referente a</span>
<span class="t" style="left:145.4px;top:557px;font-size:14.5px;color:#1a1a1a;letter-spacing:0.26px;">Serviços xyz</span>
<div style="position:absolute;left:14px;top:585px;width:561px;height:70px;border:1px solid #3d5a2c;"></div>
<div style="position:absolute;left:14px;top:608px;width:561px;height:1px;background:#3d5a2c;"></div>
<div style="position:absolute;left:14px;top:631px;width:561px;height:1px;background:#3d5a2c;"></div>
<span class="t" style="left:17.4px;top:598px;font-size:14.5px;color:#1a1a1a;font-weight:700;letter-spacing:0.35px;">Cheques Nº</span>
<span class="t" style="left:17.4px;top:621px;font-size:14.5px;color:#1a1a1a;font-weight:700;letter-spacing:-0.24px;">Bancos</span>
<span class="t" style="left:18.0px;top:644px;font-size:14.5px;color:#1a1a1a;letter-spacing:-0.10px;">CONDICIONAMOS VÁLIDA A QUITAÇÃO APÓS A COBRANÇA DO(S) CHEQUE(S)</span>
<div style="position:absolute;left:16px;top:756px;width:873px;height:93px;border:1px solid #4f7a38;border-bottom:none;"></div>
<span class="t" style="left:105.4px;top:827px;font-size:14.5px;color:#111;font-weight:700;letter-spacing:-0.10px;">SUA CIDADE,  19 DE JULHO DE 2023</span>
<div style="position:absolute;left:500px;top:836px;width:329px;height:1px;background:#222;"></div>
<div style="position:absolute;left:560px;top:839px;width:240px;height:10px;overflow:hidden;"><span class="t" style="left:53.4px;top:10px;font-size:14.5px;color:#111;font-weight:700;letter-spacing:-0.51px;">SUA EMPRESA</span></div>
<div style="position:absolute;left:1096px;top:475px;width:480px;height:24px;background:#385723;border-top:1px solid #1f2f12;"></div>
<div style="position:absolute;left:1500px;top:477px;width:76px;height:22px;overflow:hidden;"><span class="t" style="left:10.0px;top:11px;font-size:14px;color:#fff;font-weight:700;">HISTÓRICO</span></div>
<div style="position:absolute;left:1096px;top:498px;width:480px;height:23px;background:#404040;border-top:1px solid #1a1a1a;"></div>
<div style="position:absolute;left:1228px;top:499px;width:1px;height:22px;background:#151515;"></div>
<div style="position:absolute;left:1350px;top:499px;width:1px;height:22px;background:#151515;"></div>
<div style="position:absolute;left:1528px;top:499px;width:1px;height:22px;background:#151515;"></div>
<span class="t" style="left:1138.4px;top:512px;font-size:11px;color:#fff;font-weight:700;letter-spacing:-0.48px;">CLIENTE</span>
<span class="t" style="left:1262.4px;top:512px;font-size:11px;color:#fff;font-weight:700;letter-spacing:0.04px;">CPF/CNPJ</span>
<span class="t" style="left:1409.4px;top:512px;font-size:11px;color:#fff;font-weight:700;letter-spacing:-0.45px;">ENDEREÇO</span>
<div style="position:absolute;left:1540px;top:500px;width:36px;height:22px;overflow:hidden;"><span class="t" style="left:5.0px;top:12px;font-size:11.5px;color:#fff;font-weight:700;">VALOR</span></div>
<span class="t" style="left:1099.4px;top:536px;font-size:11px;color:#1a1a1a;letter-spacing:-0.66px;">PL SOLUÇÕES EM EXCEL</span>
<span class="t" style="left:1232.4px;top:536px;font-size:11.5px;color:#1a1a1a;letter-spacing:0.60px;">00.000.000/0000-01</span>
<span class="t" style="left:1355.4px;top:536px;font-size:11.5px;color:#1a1a1a;letter-spacing:-0.26px;">RUA 123 MUNICÍPIO DE RECIFE</span>
<span class="t" style="left:1099.4px;top:559px;font-size:11px;color:#1a1a1a;letter-spacing:-0.66px;">PL SOLUÇÕES EM EXCEL</span>
<span class="t" style="left:1232.4px;top:559px;font-size:11.5px;color:#1a1a1a;letter-spacing:0.60px;">00.000.000/0000-01</span>
<span class="t" style="left:1355.4px;top:559px;font-size:11.5px;color:#1a1a1a;letter-spacing:-0.26px;">RUA 123 MUNICÍPIO DE RECIFE</span>
<div style="position:absolute;left:1529px;top:525px;width:47px;height:22px;overflow:hidden;"><span class="t" style="left:2.0px;top:11px;font-size:11.5px;color:#1a1a1a;">R$ 1.000,00</span></div>
<div style="position:absolute;left:1529px;top:548px;width:47px;height:22px;overflow:hidden;"><span class="t" style="left:8.0px;top:11px;font-size:11.5px;color:#1a1a1a;">R$ 120,00</span></div>
<svg style="position:absolute;left:1528px;top:523px;" width="5" height="4" viewBox="0 0 5 4"><path d="M0 0 H5 L0 4Z" fill="#1e7a3c"/></svg>
<svg style="position:absolute;left:1528px;top:546px;" width="5" height="4" viewBox="0 0 5 4"><path d="M0 0 H5 L0 4Z" fill="#1e7a3c"/></svg>
<span class="t" style="left:1234.4px;top:788px;font-size:19px;color:#b4b4b4;letter-spacing:0.63px;">Ativar o Windows</span>
<span class="t" style="left:1234.4px;top:810px;font-size:14px;color:#bdbdbd;letter-spacing:0.35px;">Acesse Configurações para ativar o Windows.</span>
<div style="position:absolute;left:0px;top:860px;width:1600px;height:40px;background:#464646;"></div>
<svg style="position:absolute;left:16px;top:872px;" width="16" height="16" viewBox="0 0 16 16"><path d="M0 2.2 L6.8 1.3 V7.5 H0Z M7.8 1.1 L16 0 V7.5 H7.8Z M0 8.5 H6.8 V14.7 L0 13.8Z M7.8 8.5 H16 V16 L7.8 14.9Z" fill="#fff"/></svg>
<div style="position:absolute;left:48px;top:860px;width:289px;height:40px;background:#f3f3f3;border-top:1px solid #cfcfcf;"></div>
<svg style="position:absolute;left:60px;top:871px;" width="17" height="17" viewBox="0 0 17 17"><circle cx="10" cy="6.5" r="5.3" fill="none" stroke="#333" stroke-width="1.4"/><path d="M6.2 10.5 L0.8 16" stroke="#333" stroke-width="1.6"/></svg>
<span class="t" style="left:87.4px;top:881px;font-size:14.5px;color:#444;letter-spacing:-0.28px;">Pesquisar</span>
<svg style="position:absolute;left:268px;top:863px;" width="58" height="36" viewBox="0 0 58 36">
      <path d="M23 4 L18.5 0.8 L21 6 Z M35 4 L39.5 0.8 L37 6Z" fill="#c8764a"/><path d="M26.5 7 L20 1.5 M31.5 7 L38 1.5" stroke="#d9905f" stroke-width="2.6" fill="none"/>
      <path d="M27.5 9 C19 3.5 6 5.5 0.8 13.5 C2 19 5 21.5 8.5 22 C10 20.5 12 20.5 13.5 22.5 C15.5 21 17.5 21.5 19 23.5 C22 23.5 25.5 22 27.5 19Z" fill="#ea8850"/>
      <path d="M30.5 9 C39 3.5 52 5.5 57.2 13.5 C56 19 53 21.5 49.5 22 C48 20.5 46 20.5 44.5 22.5 C42.5 21 40.5 21.5 39 23.5 C36 23.5 32.5 22 30.5 19Z" fill="#ea8850"/>
      <path d="M26 10.5 C19 7 9 8.5 4 13.5 C10 12 20 13 26 16Z" fill="#f4ae80"/><path d="M32 10.5 C39 7 49 8.5 54 13.5 C48 12 38 13 32 16Z" fill="#f4ae80"/>
      <path d="M0.8 13.5 C2 19 5 21.5 8.5 22 C10 20.5 12 20.5 13.5 22.5 L14.5 19.5 C10 20 4.5 18 0.8 13.5Z" fill="#b9571f"/><path d="M57.2 13.5 C56 19 53 21.5 49.5 22 C48 20.5 46 20.5 44.5 22.5 L43.5 19.5 C48 20 53.5 18 57.2 13.5Z" fill="#b9571f"/>
      <path d="M27.5 19 C22 22 14.5 23.5 12.5 24 C13.5 29 18 33.5 24 33.5 C27 32 27.5 27 27.5 24Z" fill="#c9332b"/><path d="M30.5 19 C36 22 43.5 23.5 45.5 24 C44.5 29 40 33.5 34 33.5 C31 32 30.5 27 30.5 24Z" fill="#c9332b"/>
      <path d="M13 24.5 C15 24 17 25 18 26.5 C19.5 25 21.5 25 23 26.5 L27 22 L27.5 19 C22 22 16 23.5 13 24.5Z" fill="#e0663a"/><path d="M45 24.5 C43 24 41 25 40 26.5 C38.500 25 36.5 25 35 26.5 L31 22 L30.5 19 C36 22 42 23.5 45 24.5Z" fill="#e0663a"/>
      <ellipse cx="29" cy="21" rx="3.1" ry="13.8" fill="#ece6e1"/><ellipse cx="29" cy="8.5" rx="4.2" ry="4" fill="#f3eeea"/>
      <path d="M26.2 15 H31.8 M26 19.5 H32 M26 24 H32 M26.4 28.5 H31.600" stroke="#cfc5bd" stroke-width="1"/></svg>
<svg style="position:absolute;left:351px;top:871px;" width="18" height="17" viewBox="0 0 18 17"><path d="M0.8 3.5 V1.2 H11.2 V3.5 M0.8 13.5 V15.8 H11.2 V13.5" fill="none" stroke="#fff" stroke-width="1.5"/><rect x="0.8" y="5.3" width="10.4" height="6.4" fill="none" stroke="#fff" stroke-width="1.5"/><path d="M15.5 5.5 V16.5" stroke="#fff" stroke-width="1.8"/><rect x="14.5" y="1" width="2" height="2.4" fill="#fff"/></svg>
<div style="position:absolute;left:485px;top:860px;width:44px;height:40px;background:#707070;"></div>
<div style="position:absolute;left:529px;top:860px;width:2px;height:40px;background:#5a5a5a;"></div>
<div style="position:absolute;left:391px;top:898px;width:40px;height:2px;background:#7ab9ea;"></div>
<div style="position:absolute;left:440px;top:898px;width:40px;height:2px;background:#7ab9ea;"></div>
<div style="position:absolute;left:485px;top:898px;width:44px;height:2px;background:#7ab9ea;"></div>
<div style="position:absolute;left:538px;top:898px;width:40px;height:2px;background:#7ab9ea;"></div>
<svg style="position:absolute;left:400px;top:869px;" width="23" height="20" viewBox="0 0 23 20"><path d="M0 2 H8 L10 4 H22 V19 H0Z" fill="#f2b73c"/><path d="M0 6 H22 V19 H0Z" fill="#fbd56a"/><rect x="6" y="11" width="10" height="8" fill="#3a8de0"/><rect x="9" y="14" width="4" height="5" fill="#fbd56a"/></svg>
<svg style="position:absolute;left:447px;top:867px;" width="26" height="26" viewBox="0 0 26 26"><circle cx="13" cy="13" r="12.5" fill="#e33b2e"/>
      <path d="M13 13 L2.2 6.8 A12.5 12.5 0 0 0 10 25.1Z" fill="#2da94f"/>
      <path d="M13 13 L10 25.1 A12.5 12.5 0 0 0 24.5 8 L13 8Z" fill="#fcc934"/>
      <path d="M2.2 6.8 A12.5 12.5 0 0 1 24.5 8 L13 8Z" fill="#e33b2e"/>
      <circle cx="13" cy="13" r="5.8" fill="#fff"/><circle cx="13" cy="13" r="4.6" fill="#3f86f0"/></svg>
<svg style="position:absolute;left:497px;top:868px;" width="25" height="24" viewBox="0 0 25 24"><rect x="6" y="1" width="18" height="22" rx="1.5" fill="#21a366"/><rect x="15" y="1" width="9" height="5.5" fill="#33c481"/><rect x="15" y="6.5" width="9" height="5.5" fill="#21a366"/><rect x="6" y="6.5" width="9" height="5.5" fill="#107c41"/><rect x="6" y="12" width="9" height="5.5" fill="#185c37"/><rect x="15" y="12" width="9" height="5.5" fill="#107c41"/><rect x="6" y="17.5" width="18" height="5.5" fill="#185c37"/>
      <rect x="0" y="5.5" width="13" height="13" rx="1.2" fill="#107c41"/><text x="6.5" y="16" text-anchor="middle" font-family="Liberation Sans, sans-serif" font-weight="700" font-size="10.5" fill="#fff">X</text></svg>
<svg style="position:absolute;left:544px;top:866px;" width="27" height="26" viewBox="0 0 27 26"><path d="M1 15 C1 8 8 4 14 6 C21 8 22 15 18 17 C15 18 17 21 14 23 C8 26 1 21 1 15Z" fill="#e9eff8" stroke="#6f8fc4" stroke-width="1.2"/>
      <circle cx="7" cy="12" r="2.2" fill="#e04a3a"/><circle cx="13" cy="10" r="2.2" fill="#3aa03a"/><circle cx="6" cy="18" r="2.2" fill="#3a6fd0"/><circle cx="12" cy="20" r="2" fill="#e8b020"/>
      <path d="M22 1 L25 2.5 L18 17 L15 16Z" fill="#e09a3a"/><path d="M15 16 L18 17 L15 22Z" fill="#6b4a2b"/></svg>
<svg style="position:absolute;left:1225px;top:868px;" width="24" height="24" viewBox="0 0 24 24"><circle cx="11" cy="13" r="10" fill="#f5a623"/><circle cx="11" cy="13" r="10" fill="url(#sg)"/><defs><radialGradient id="sg" cx="0.4" cy="0.4"><stop offset="0" stop-color="#ffb347"/><stop offset="1" stop-color="#f07c1a"/></radialGradient></defs><circle cx="17.5" cy="6" r="5.2" fill="#d42a20"/><text x="17.5" y="9" text-anchor="middle" font-family="Liberation Sans, sans-serif" font-size="8.5" fill="#fff">1</text></svg>
<span class="t" style="left:1255.4px;top:881px;font-size:14px;color:#fff;letter-spacing:-0.36px;">28°C</span>
<span class="t" style="left:1293.4px;top:881px;font-size:14px;color:#fff;letter-spacing:-0.18px;">Ensolarado</span>
<svg style="position:absolute;left:1386px;top:875px;" width="14" height="8" viewBox="0 0 14 8"><path d="M0.7 7.3 L7 1 L13.3 7.3" fill="none" stroke="#fff" stroke-width="1.3"/></svg>
<svg style="position:absolute;left:1411px;top:872px;" width="14" height="16" viewBox="0 0 14 16"><rect x="1" y="3" width="8" height="10" rx="2" fill="none" stroke="#fff" stroke-width="1.2"/><path d="M2 1 H8 M2 15 H8" stroke="#fff" stroke-width="1.2"/><circle cx="11" cy="8" r="1.8" fill="none" stroke="#fff" stroke-width="1.1"/></svg>
<svg style="position:absolute;left:1433px;top:872px;" width="18" height="16" viewBox="0 0 18 16"><rect x="5" y="1" width="12" height="9" fill="none" stroke="#fff" stroke-width="1.2"/><path d="M8 14 H14 M11 10 V14" stroke="#fff" stroke-width="1.2"/><rect x="0.6" y="3" width="4" height="11" fill="#464646" stroke="#fff" stroke-width="1.1"/></svg>
<svg style="position:absolute;left:1457px;top:872px;" width="17" height="16" viewBox="0 0 17 16"><path d="M1 6 H4 L8 2 V14 L4 10 H1Z" fill="none" stroke="#fff" stroke-width="1.1"/><path d="M10.5 5.5 C11.8 7 11.8 9 10.5 10.5 M12.8 3.5 C15 6 15 10 12.8 12.5" fill="none" stroke="#fff" stroke-width="1.1"/></svg>
<span class="t" style="left:1497.4px;top:871px;font-size:12px;color:#fff;letter-spacing:-0.46px;">14:19</span>
<span class="t" style="left:1482.4px;top:888px;font-size:12px;color:#fff;letter-spacing:-0.10px;">25/07/2023</span>
<svg style="position:absolute;left:1559px;top:871px;" width="26" height="26" viewBox="0 0 26 26"><path d="M0.5 0.8 H17 V12.2 H6.5 L3.2 15.5 V12.2 H0.5Z" fill="#fff"/><path d="M3 4 H14.5 M3 6.5 H14.5 M3 9 H11" stroke="#464646" stroke-width="1"/><circle cx="15.2" cy="16.2" r="7.6" fill="#464646" stroke="#e8e8e8" stroke-width="1.1"/><text x="15.2" y="20.3" text-anchor="middle" font-family="Liberation Sans, sans-serif" font-weight="700" font-size="11.5" fill="#fff">2</text></svg>
<div style="position:absolute;left:1596px;top:860px;width:1px;height:40px;background:#8a8a8a;"></div>
<div style="position:absolute;left:498px;top:190px;width:603px;height:552px;background:#fff;border:1px solid #3f8a5e;border-top-color:#5e5e5e;border-right-color:#4a6b57;box-shadow:0 7px 20px rgba(0,0,0,.36),0 0 5px rgba(0,0,0,.22);"></div>
<div style="position:absolute;left:499px;top:221px;width:601px;height:520px;border:1px solid #35a062;background:linear-gradient(#95d154 0px,#ffffff 285px);"></div>
<span class="t" style="left:506.9px;top:205px;font-size:12px;color:#000;letter-spacing:-0.26px;">Gerador de Recibo</span>
<svg style="position:absolute;left:1079px;top:199px;" width="12" height="12" viewBox="0 0 12 12"><path d="M0.8 0.8 L11.2 11.2 M11.2 0.8 L0.8 11.2" stroke="#111" stroke-width="1.25"/></svg>
<svg style="position:absolute;left:1071px;top:229px;" width="25" height="24" viewBox="0 0 25 24"><rect x="0.5" y="0.5" width="23" height="22.5" fill="#f6f7fa"/><rect x="0.5" y="5" width="14" height="4.6" fill="#1f8f1f"/><circle cx="4.5" cy="5.2" r="1.6" fill="#e8e8e8" stroke="#bdbdbd" stroke-width="0.6"/>
      <path d="M19 11 V19 C19 21 18 22 16.5 22.3" fill="none" stroke="#9a9a9a" stroke-width="0.9"/>
      <circle cx="18.2" cy="6.2" r="5.9" fill="#2fae2f" stroke="#1d8a1d" stroke-width="0.8"/><path d="M18.2 2.6 V9.8 M14.6 6.2 H21.8" stroke="#eaffea" stroke-width="2"/></svg>
<span class="t" style="left:514.9px;top:238px;font-size:11px;color:#000;font-weight:700;font-family:'DejaVu Sans','Liberation Sans',sans-serif;letter-spacing:0.10px;-webkit-text-stroke:0.25px #000;">Recibo Nº</span>
<div style="position:absolute;left:515px;top:245px;width:80px;height:24px;background:#fff;border:1px solid #666c60;"></div>
<div style="position:absolute;left:555.5px;top:256px;width:5px;height:1px;background:#444;"></div>
<span class="t" style="left:602.4px;top:238px;font-size:11px;color:#000;font-weight:700;font-family:'DejaVu Sans','Liberation Sans',sans-serif;letter-spacing:0.30px;-webkit-text-stroke:0.25px #000;">Data de Emissão</span>
<div style="position:absolute;left:603px;top:245px;width:112px;height:24px;background:#fff;border:1px solid #666c60;"></div>
<span class="t" style="left:621.9px;top:256px;font-size:11.5px;color:#3a3a3a;font-weight:700;font-family:'DejaVu Sans','Liberation Sans',sans-serif;letter-spacing:0.92px;">25/07/2023</span>
<span class="t" style="left:514.9px;top:294px;font-size:11px;color:#000;font-weight:700;font-family:'DejaVu Sans','Liberation Sans',sans-serif;letter-spacing:0.17px;-webkit-text-stroke:0.25px #000;">Selecione o Cliente</span>
<div style="position:absolute;left:515px;top:301px;width:392px;height:24px;background:#fff;border:1px solid #666c60;"></div>
<div style="position:absolute;left:890px;top:302px;width:16px;height:22px;background:#f0f0f0;border:1px solid #fff;border-right:1px solid #6a6a6a;border-bottom:1px solid #6a6a6a;box-shadow:inset -1px -1px 0 #a8a8a8;"></div>
<svg style="position:absolute;left:894px;top:311px;" width="7" height="4" viewBox="0 0 7 4"><path d="M0 0 H7 L3.5 4Z" fill="#000"/></svg>
<svg style="position:absolute;left:917px;top:282px;" width="12" height="12" viewBox="0 0 12 12"><circle cx="6" cy="6" r="5.3" fill="#fff" stroke="#e8e8e8" stroke-width="1"/><path d="M2.25 9.75 A5.3 5.3 0 0 1 9.75 2.25" fill="none" stroke="#7a7a7a" stroke-width="1.1"/><path d="M3 8.9 A4.2 4.2 0 0 1 8.9 3" fill="none" stroke="#404040" stroke-width="1"/></svg>
<span class="t" style="left:932.4px;top:290px;font-size:11px;color:#000;font-weight:700;font-family:'DejaVu Sans','Liberation Sans',sans-serif;letter-spacing:-0.22px;-webkit-text-stroke:0.25px #000;">CPF</span>
<svg style="position:absolute;left:973px;top:282px;" width="12" height="12" viewBox="0 0 12 12"><circle cx="6" cy="6" r="5.3" fill="#fff" stroke="#e8e8e8" stroke-width="1"/><path d="M2.25 9.75 A5.3 5.3 0 0 1 9.75 2.25" fill="none" stroke="#7a7a7a" stroke-width="1.1"/><path d="M3 8.9 A4.2 4.2 0 0 1 8.9 3" fill="none" stroke="#404040" stroke-width="1"/></svg>
<span class="t" style="left:988.4px;top:290px;font-size:11px;color:#000;font-weight:700;font-family:'DejaVu Sans','Liberation Sans',sans-serif;letter-spacing:0.59px;-webkit-text-stroke:0.25px #000;">CNPJ</span>
<div style="position:absolute;left:915px;top:301px;width:176px;height:24px;background:#fff;border:1px solid #666c60;"></div>
<span class="t" style="left:514.9px;top:342px;font-size:11px;color:#000;font-weight:700;font-family:'DejaVu Sans','Liberation Sans',sans-serif;letter-spacing:0.44px;-webkit-text-stroke:0.25px #000;">Endereco</span>
<div style="position:absolute;left:515px;top:349px;width:576px;height:24px;background:#fff;border:1px solid #666c60;"></div>
<span class="t" style="left:514.9px;top:390px;font-size:11px;color:#000;font-weight:700;font-family:'DejaVu Sans','Liberation Sans',sans-serif;letter-spacing:0.65px;-webkit-text-stroke:0.25px #000;">Valor</span>
<div style="position:absolute;left:515px;top:397px;width:136px;height:24px;background:#fff;border:1px solid #666c60;"></div>
<svg style="position:absolute;left:660px;top:377px;" width="12" height="12" viewBox="0 0 12 12"><circle cx="6" cy="6" r="5.3" fill="#fff" stroke="#e8e8e8" stroke-width="1"/><path d="M2.25 9.75 A5.3 5.3 0 0 1 9.75 2.25" fill="none" stroke="#7a7a7a" stroke-width="1.1"/><path d="M3 8.9 A4.2 4.2 0 0 1 8.9 3" fill="none" stroke="#404040" stroke-width="1"/></svg>
<span class="t" style="left:676.4px;top:386px;font-size:11px;color:#000;font-weight:700;font-family:'DejaVu Sans','Liberation Sans',sans-serif;letter-spacing:0.20px;-webkit-text-stroke:0.25px #000;">Dinheiro</span>
<div style="position:absolute;left:659px;top:397px;width:136px;height:24px;background:#fff;border:1px solid #666c60;"></div>
<svg style="position:absolute;left:804px;top:377px;" width="12" height="12" viewBox="0 0 12 12"><circle cx="6" cy="6" r="5.3" fill="#fff" stroke="#e8e8e8" stroke-width="1"/><path d="M2.25 9.75 A5.3 5.3 0 0 1 9.75 2.25" fill="none" stroke="#7a7a7a" stroke-width="1.1"/><path d="M3 8.9 A4.2 4.2 0 0 1 8.9 3" fill="none" stroke="#404040" stroke-width="1"/></svg>
<span class="t" style="left:820.4px;top:386px;font-size:11px;color:#000;font-weight:700;font-family:'DejaVu Sans','Liberation Sans',sans-serif;letter-spacing:0.53px;-webkit-text-stroke:0.25px #000;">Cheque</span>
<div style="position:absolute;left:803px;top:397px;width:136px;height:24px;background:#fff;border:1px solid #666c60;"></div>
<span class="t" style="left:514.9px;top:438px;font-size:11px;color:#000;font-weight:700;font-family:'DejaVu Sans','Liberation Sans',sans-serif;letter-spacing:0.58px;-webkit-text-stroke:0.25px #000;">Referente a</span>
<div style="position:absolute;left:515px;top:445px;width:576px;height:24px;background:#fff;border:1px solid #666c60;"></div>
<div style="position:absolute;left:514px;top:478px;width:120px;height:12px;overflow:hidden;"><span class="t" style="left:0.9px;top:8px;font-size:11px;color:#000;font-weight:700;font-family:'DejaVu Sans','Liberation Sans',sans-serif;letter-spacing:0.04px;-webkit-text-stroke:0.25px #000;">Cheques Nº</span></div>
<div style="position:absolute;left:515px;top:493px;width:576px;height:24px;background:#fff;border:1px solid #666c60;"></div>
<span class="t" style="left:514.9px;top:534px;font-size:11px;color:#000;font-weight:700;font-family:'DejaVu Sans','Liberation Sans',sans-serif;letter-spacing:0.49px;-webkit-text-stroke:0.25px #000;">Bancos</span>
<div style="position:absolute;left:515px;top:541px;width:576px;height:24px;background:#fff;border:1px solid #666c60;"></div>
<span class="t" style="left:514.9px;top:582px;font-size:11px;color:#000;font-weight:700;font-family:'DejaVu Sans','Liberation Sans',sans-serif;letter-spacing:0.82px;-webkit-text-stroke:0.25px #000;">Data</span>
<div style="position:absolute;left:515px;top:589px;width:112px;height:24px;background:#fff;border:1px solid #666c60;"></div>
<div style="position:absolute;left:514px;top:630px;width:160px;height:12px;overflow:hidden;"><span class="t" style="left:0.9px;top:8px;font-size:11px;color:#000;font-weight:700;font-family:'DejaVu Sans','Liberation Sans',sans-serif;letter-spacing:0.20px;-webkit-text-stroke:0.25px #000;">Quem Gerou o Recibo</span></div>
<div style="position:absolute;left:515px;top:645px;width:288px;height:24px;background:#fff;border:1px solid #666c60;"></div>
<span class="t" style="left:641.4px;top:658px;font-size:11px;color:#a0a0a0;font-weight:700;font-family:'DejaVu Sans','Liberation Sans',sans-serif;letter-spacing:0.44px;">Admin</span>
<span class="t" style="left:810.9px;top:638px;font-size:11px;color:#000;font-weight:700;font-family:'DejaVu Sans','Liberation Sans',sans-serif;letter-spacing:0.29px;-webkit-text-stroke:0.25px #000;">Matrícula</span>
<div style="position:absolute;left:811px;top:645px;width:128px;height:24px;background:#fff;border:1px solid #666c60;"></div>
<span class="t" style="left:873.4px;top:658px;font-size:11px;color:#a0a0a0;font-weight:700;font-family:'DejaVu Sans','Liberation Sans',sans-serif;">0</span>
<div style="position:absolute;left:556px;top:685px;width:127px;height:40px;background:#f0f0f0;border-top:1px solid #e3e3e3;border-left:1px solid #e3e3e3;border-right:2px solid #6d6d6d;border-bottom:2px solid #6d6d6d;box-shadow:inset -1px -1px 0 #a5a5a5, inset 1px 1px 0 #fff;"></div>
<div style="position:absolute;left:691px;top:685px;width:128px;height:40px;background:#f0f0f0;border-top:1px solid #e3e3e3;border-left:1px solid #e3e3e3;border-right:2px solid #6d6d6d;border-bottom:2px solid #6d6d6d;box-shadow:inset -1px -1px 0 #a5a5a5, inset 1px 1px 0 #fff;"></div>
<div style="position:absolute;left:828px;top:685px;width:127px;height:40px;background:#f0f0f0;border-top:1px solid #e3e3e3;border-left:1px solid #e3e3e3;border-right:2px solid #6d6d6d;border-bottom:2px solid #6d6d6d;box-shadow:inset -1px -1px 0 #a5a5a5, inset 1px 1px 0 #fff;"></div>
<div style="position:absolute;left:963px;top:685px;width:128px;height:40px;background:#f0f0f0;border-top:1px solid #e3e3e3;border-left:1px solid #e3e3e3;border-right:2px solid #6d6d6d;border-bottom:2px solid #6d6d6d;box-shadow:inset -1px -1px 0 #a5a5a5, inset 1px 1px 0 #fff;"></div>
<span class="t" style="left:585.4px;top:704px;font-size:11px;color:#000;font-weight:700;font-family:'DejaVu Sans Condensed','DejaVu Sans',sans-serif;letter-spacing:0.40px;">Salvar</span>
<span class="t" style="left:720.4px;top:704px;font-size:11px;color:#000;font-weight:700;font-family:'DejaVu Sans Condensed','DejaVu Sans',sans-serif;letter-spacing:0.08px;">Excluir</span>
<span class="t" style="left:838.4px;top:704px;font-size:11px;color:#000;font-weight:700;font-family:'DejaVu Sans Condensed','DejaVu Sans',sans-serif;letter-spacing:0.18px;">Gerar Recibo</span>
<span class="t" style="left:968.9px;top:704px;font-size:11px;color:#000;font-weight:700;font-family:'DejaVu Sans Condensed','DejaVu Sans',sans-serif;letter-spacing:0.07px;">Puxar Histórico</span>
<svg style="position:absolute;left:629px;top:693px;" width="23" height="24" viewBox="0 0 23 24"><path d="M1 1 H22 V23 H4 L1 20Z" fill="#5a5f66"/><rect x="5" y="2" width="13" height="9" fill="#e8eaee"/><rect x="5" y="14" width="13" height="9" fill="#3a3e44"/><rect x="7" y="15.5" width="4" height="6" fill="#c9ccd2"/></svg>
<svg style="position:absolute;left:764px;top:692px;" width="24" height="24" viewBox="0 0 24 24"><circle cx="12" cy="12" r="11.3" fill="#d8271c" stroke="#8f1410" stroke-width="1"/><circle cx="12" cy="12" r="8.5" fill="#e8392c"/><path d="M7.5 7.5 L16.5 16.5 M16.5 7.5 L7.5 16.5" stroke="#fff" stroke-width="2.8" stroke-linecap="round"/></svg>
<svg style="position:absolute;left:920px;top:692px;" width="21" height="26" viewBox="0 0 21 26"><path d="M1 2 H14 L19 7 V25 H1Z" fill="#e4e4e4" stroke="#cfcfcf"/><path d="M14 2 L19 7 H14Z" fill="#555"/><path d="M4 8 H14 M4 11 H15 M4 14 H15 M4 17 H15 M4 20 H15" stroke="#666" stroke-width="1.4"/></svg>
<svg style="position:absolute;left:1060px;top:692px;" width="27" height="26" viewBox="0 0 27 26"><circle cx="10.5" cy="10.5" r="9.5" fill="#eef5fc" stroke="#7aa7d6" stroke-width="2"/><path d="M10.5 4.5 V10.5 L14 12" fill="none" stroke="#5a5a5a" stroke-width="1.1"/>
      <rect x="11.5" y="10.5" width="14" height="14" rx="1.5" fill="#fafafa" stroke="#b8b8b8"/><rect x="11.5" y="10.5" width="14" height="4" fill="#3aa832"/><path d="M16 15 V24 M21 15 V24 M12 18 H25 M12 21 H25" stroke="#d0d0d0" stroke-width="0.8"/></svg>
<div style="position:absolute;left:576px;top:740px;width:311px;height:2px;background:#17693c;"></div>
</body></html>
